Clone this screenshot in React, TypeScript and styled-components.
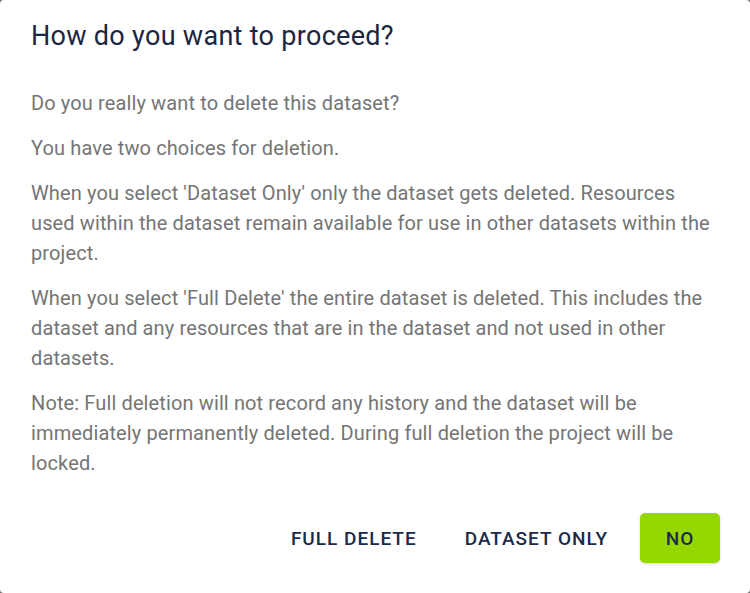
import React from 'react';
import styled, { createGlobalStyle } from 'styled-components';

const GlobalStyle = createGlobalStyle`
    html, body {
        margin: 0;
        padding: 0;
        height: 100%;
        background: #6e6e6e;
    }
    #root {
        height: 100%;
    }
`;

const Dialog = styled.div`
    box-sizing: border-box;
    width: 750px;
    height: 593px;
    background: #ffffff;
    border-radius: 4px;
    display: flex;
    flex-direction: column;
    padding: 18px 30px 30px 31px;
    font-family: Roboto, "Liberation Sans", sans-serif;
`;

const Title = styled.h2`
    margin: 0 0 34px;
    font-family: Roboto, "Liberation Sans", sans-serif;
    font-size: 27px;
    line-height: 36px;
    font-weight: 400;
    color: #1b2641;
    letter-spacing: 0.3px;
`;

const Content = styled.div`
    flex: 1;
`;

const Paragraph = styled.p`
    margin: 0 0 15px;
    font-size: 20px;
    line-height: 30px;
    letter-spacing: 0.12px;
    color: #757575;
`;

const Actions = styled.div`
    display: flex;
    justify-content: flex-end;
    align-items: center;
    gap: 16px;
`;

const Button = styled.button<{ $primary?: boolean }>`
    height: 50px;
    min-width: 80px;
    padding: 0 16px;
    border: none;
    border-radius: 5px;
    background: ${props => props.$primary ? '#97d700' : 'transparent'};
    box-shadow: ${props => props.$primary ? '0 1px 3px rgba(0, 0, 0, 0.15)' : 'none'};
    color: #1b2a47;
    font-family: Roboto, "Liberation Sans", sans-serif;
    font-size: 19px;
    font-weight: 500;
    letter-spacing: 1px;
    text-transform: uppercase;
    cursor: pointer;
`;

const paragraphs = [
    'Do you really want to delete this dataset?',
    'You have two choices for deletion.',
    "When you select 'Dataset Only' only the dataset gets deleted. Resources used within the dataset remain available for use in other datasets within the project.",
    "When you select 'Full Delete' the entire dataset is deleted. This includes the dataset and any resources that are in the dataset and not used in other datasets.",
    'Note: Full deletion will not record any history and the dataset will be immediately permanently deleted. During full deletion the project will be locked.',
];

export default function App() {
    return (
        <>
            <GlobalStyle />
            <Dialog>
                <Title>How do you want to proceed?</Title>
                <Content>
                    {paragraphs.map((text, i) => (
                        <Paragraph key={i}>{text}</Paragraph>
                    ))}
                </Content>
                <Actions>
                    <Button>Full Delete</Button>
                    <Button>Dataset Only</Button>
                    <Button $primary>No</Button>
                </Actions>
            </Dialog>
        </>
    );
}
